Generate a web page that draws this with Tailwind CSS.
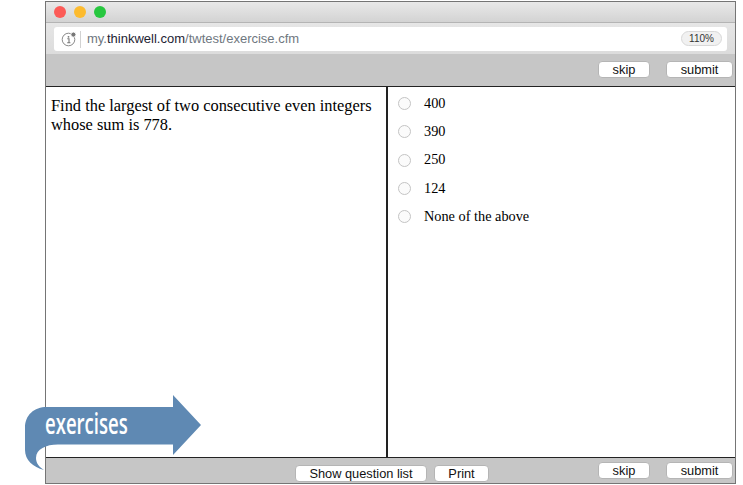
<!DOCTYPE html>
<html lang="en">
<head>
  <meta charset="UTF-8" />
  <title>exercise</title>
  <script src="https://cdn.jsdelivr.net/npm/@tailwindcss/browser@4"></script>
</head>
<body class="bg-white w-[743px] h-[485px] overflow-hidden relative font-['Liberation_Sans',sans-serif]">
  <div class="ml-[45px] mt-px w-[691px] h-[483px] border border-[#757575] flex flex-col">
    <!-- browser chrome -->
    <div class="h-[21px] shrink-0 bg-gradient-to-b from-[#e9e9e9] to-[#d3d3d3] border-b border-[#b4b4b4] flex items-center gap-[8px] pl-[8px]">
      <span class="w-3 h-3 rounded-full bg-[#fc5b57]"></span>
      <span class="w-3 h-3 rounded-full bg-[#fdbb2e]"></span>
      <span class="w-3 h-3 rounded-full bg-[#27c73f]"></span>
    </div>
    <div class="h-[31px] shrink-0 bg-gradient-to-b from-[#e6e6e6] to-[#dcdcdc] px-[8px] pt-[4px]">
      <div class="h-[24px] bg-white rounded-[3px] flex items-center pl-[7px] pr-[5px]">
        <svg width="16" height="16" viewBox="0 0 16 16" class="shrink-0">
          <circle cx="7.5" cy="8.5" r="6.3" fill="none" stroke="#8a8a8a" stroke-width="1" />
          <circle cx="7.5" cy="5.8" r="0.9" fill="#777" />
          <path d="M6.3 7.8H8V11.6M6.2 11.8H9.4" fill="none" stroke="#777" stroke-width="1.1" />
          <circle cx="12.4" cy="3.6" r="2.6" fill="#777" stroke="#fff" stroke-width="1" />
        </svg>
        <span class="w-px h-[17px] bg-[#d2d2d2] ml-[3px] mr-[6px]"></span>
        <span class="text-[13px] text-[#6f7780]">my.<span class="text-[#1d2433]">thinkwell.com</span>/twtest/exercise.cfm</span>
        <span class="ml-auto w-[41px] h-[15px] mt-[-1px] rounded-full bg-[#f1f1f1] border border-[#d8d8d8] text-[10px] leading-[13px] text-center text-[#333]">110%</span>
      </div>
    </div>
    <!-- top toolbar -->
    <div class="h-[33px] shrink-0 bg-[#c6c6c6] border-b border-[#222] flex justify-end items-start pt-[7px] pr-[2px] gap-[16px]">
      <button class="w-[52px] h-[17px] bg-white rounded-[4px] border border-[#b5b5b5] text-[12.8px] leading-[14px] text-[#111]">skip</button>
      <button class="w-[67px] h-[17px] bg-white rounded-[4px] border border-[#b5b5b5] text-[12.8px] leading-[14px] text-[#111]">submit</button>
    </div>
    <!-- question and answers -->
    <div class="flex-1 flex min-h-0 font-['Liberation_Serif',serif] text-black">
      <div class="w-[342px] shrink-0 border-r-2 border-[#222] pl-[5px] pt-[9px] pr-2 text-[16.4px] leading-[19px]">
        <p>Find the largest of two consecutive even integers whose sum is 778.</p>
      </div>
      <div class="flex-1 pl-[10px] pt-[2.35px] text-[14.3px]">
        <div class="h-[28.3px] flex items-center gap-[13px]"><span class="w-[13px] h-[13px] rounded-full border border-[#c4c4c4] bg-[#fbfbfb]"></span>400</div>
        <div class="h-[28.3px] flex items-center gap-[13px]"><span class="w-[13px] h-[13px] rounded-full border border-[#c4c4c4] bg-[#fbfbfb]"></span>390</div>
        <div class="h-[28.3px] flex items-center gap-[13px]"><span class="w-[13px] h-[13px] rounded-full border border-[#c4c4c4] bg-[#fbfbfb]"></span>250</div>
        <div class="h-[28.3px] flex items-center gap-[13px]"><span class="w-[13px] h-[13px] rounded-full border border-[#c4c4c4] bg-[#fbfbfb]"></span>124</div>
        <div class="h-[28.3px] flex items-center gap-[13px]"><span class="w-[13px] h-[13px] rounded-full border border-[#c4c4c4] bg-[#fbfbfb]"></span>None of the above</div>
      </div>
    </div>
    <!-- bottom toolbar -->
    <div class="h-[26px] shrink-0 bg-[#c6c6c6] border-t border-[#222] flex items-start pr-[2px] text-[12.8px] text-[#111]">
      <button class="ml-[249px] mt-[7px] w-[132px] h-[17px] bg-white rounded-[4px] border border-[#b5b5b5] leading-[15px]">Show question list</button>
      <button class="ml-[7px] mt-[7px] w-[55px] h-[17px] bg-white rounded-[4px] border border-[#b5b5b5] leading-[15px]">Print</button>
      <button class="ml-auto mt-[4px] w-[52px] h-[17px] bg-white rounded-[4px] border border-[#b5b5b5] leading-[14px]">skip</button>
      <button class="ml-[16px] mt-[4px] w-[67px] h-[17px] bg-white rounded-[4px] border border-[#b5b5b5] leading-[14px]">submit</button>
    </div>
  </div>
  <!-- exercises badge over the window edge -->
  <div class="absolute left-[25px] top-[395px] w-[177px] h-[76px]">
    <svg width="177" height="76" viewBox="25 395 177 76" class="absolute inset-0">
      <path d="M47 407H173V395L201 425L173 455V444.5H58C46 444.5 36 449 36 458C36 463 39 467 44 470C33 467 25 460 25 450V428C25 415 34 407 47 407Z" fill="#5f89b3" />
    </svg>
    <span class="absolute left-[20px] top-[10px] text-white font-semibold text-[29px] leading-[36px] origin-left scale-x-[0.64] font-['Open_Sans',sans-serif] whitespace-nowrap">exercises</span>
  </div>
</body>
</html>
